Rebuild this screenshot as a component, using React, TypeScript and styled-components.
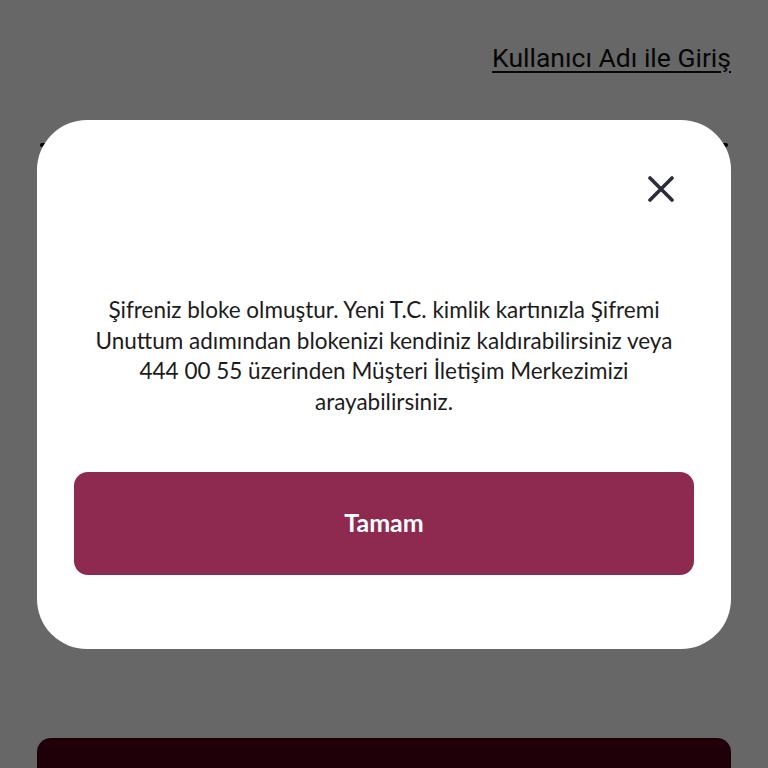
import React from 'react';
import styled, { createGlobalStyle } from 'styled-components';

const GlobalStyle = createGlobalStyle`
  html, body { margin: 0; padding: 0; background: #ffffff; }
  body { font-family: Lato, "Noto Sans", sans-serif; overflow: hidden; }
`;

// --- page under the dialog ---
const Page = styled.div`
  width: 768px; height: 768px; box-sizing: border-box; overflow: hidden;
  padding: 42px 37px 0; display: flex; flex-direction: column;
  background: #ffffff;
`;

const TopRow = styled.div`
  display: flex; justify-content: flex-end;
`;

const TextLink = styled.a`
  font-family: Roboto, "Liberation Sans", sans-serif; font-size: 26.5px;
  color: #111; text-decoration: underline; text-underline-offset: 4px;
  text-decoration-thickness: 2px;
`;

const Title = styled.div`
  margin-top: 70px; height: 4px; border-radius: 2px; background: #000;
  margin-left: 3px; margin-right: 3px;
`;

const Spacer = styled.div`flex: 1;`;

const DarkButton = styled.div`
  height: 30px; border-radius: 14px 14px 0 0; background: #500014;
`;

// --- dialog ---
const Overlay = styled.div`
  position: fixed; inset: 0; background: rgba(0, 0, 0, 0.596);
  display: flex; justify-content: center; align-items: flex-start;
  padding-top: 120px;
`;

const Modal = styled.div`
  width: 694px; box-sizing: border-box; background: #fff; border-radius: 50px;
  padding: 56px 37px 74px; display: flex; flex-direction: column;
`;

const ModalHeader = styled.div`
  display: flex; justify-content: flex-end; padding-right: 20px; height: 26px;
`;

const CloseButton = styled.button`
  border: none; background: none; padding: 0; width: 26px; height: 26px;
  cursor: pointer; display: flex;
`;

const Message = styled.p`
  margin: 93px 0 0; text-align: center; font-size: 22.5px; line-height: 30.5px;
  color: #1c1c1c; font-weight: 400;
`;

const PrimaryButton = styled.button`
  margin-top: 55px; height: 103px; padding: 0 0 4px; border: none; border-radius: 14px;
  background: #8e2a4f; color: #fff; font-family: Lato, "Noto Sans", sans-serif;
  font-size: 25px; font-weight: 700; cursor: pointer;
`;

export default function App() {
  return (
    <>
      <GlobalStyle />
      <Page>
        <TopRow>
          <TextLink>Kullanıcı Adı ile Giriş</TextLink>
        </TopRow>
        <Title />
        <Spacer />
        <DarkButton />
      </Page>
      <Overlay>
        <Modal>
          <ModalHeader>
            <CloseButton aria-label="Kapat">
              <svg width="26" height="26" viewBox="0 0 26 26">
                <path d="M2 2 L24 24 M24 2 L2 24" stroke="#2a2c3c" strokeWidth="3.6" strokeLinecap="round" />
              </svg>
            </CloseButton>
          </ModalHeader>
          <Message>
            Şifreniz bloke olmuştur. Yeni T.C. kimlik kartınızla Şifremi Unuttum adımından blokenizi kendiniz kaldırabilirsiniz veya 444 00 55 üzerinden Müşteri İletişim Merkezimizi arayabilirsiniz.
          </Message>
          <PrimaryButton>Tamam</PrimaryButton>
        </Modal>
      </Overlay>
    </>
  );
}
